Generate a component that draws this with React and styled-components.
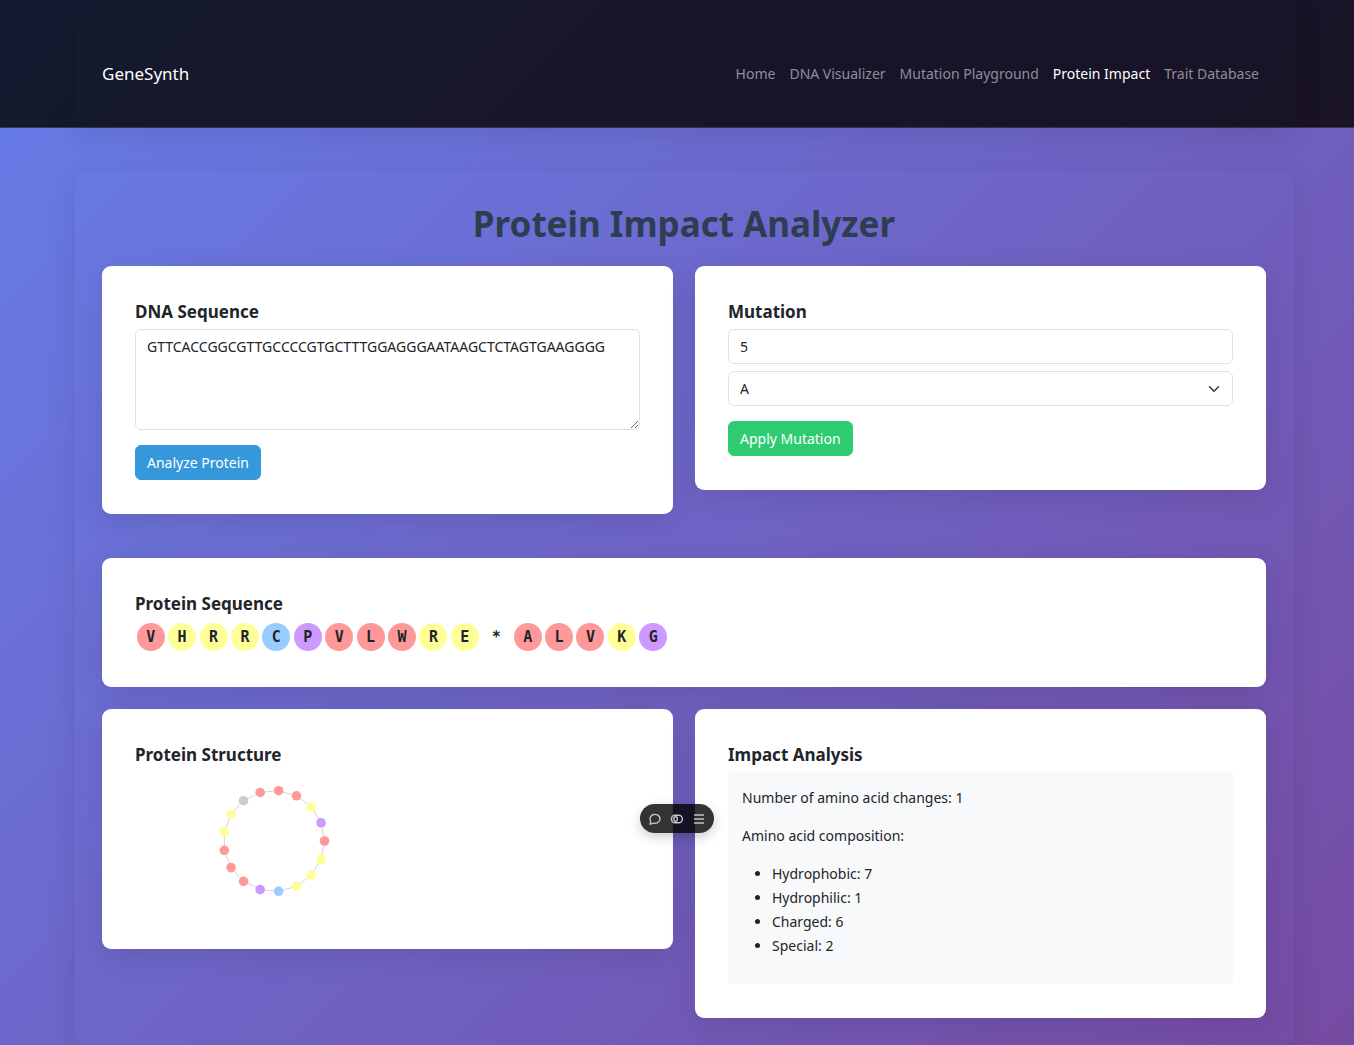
import React, { useState } from "react";
import styled, { createGlobalStyle } from "styled-components";

const FAMILIES = {
  hydrophobic: "#ff9999",
  hydrophilic: "#99ccff",
  charged: "#ffff99",
  special: "#cc99ff",
};

const RESIDUES = {
  V: "hydrophobic", A: "hydrophobic", L: "hydrophobic", W: "hydrophobic",
  C: "hydrophilic",
  H: "charged", R: "charged", E: "charged", K: "charged",
  P: "special", G: "special",
};

const PROTEIN = "VHRRCPVLWRE*ALVKG".split("");

const colorOf = (residue, fallback) => FAMILIES[RESIDUES[residue]] || fallback;

const GlobalStyle = createGlobalStyle`
  *, *::before, *::after { box-sizing: border-box; }
  html { background: #6a62c0; }
  body {
    margin: 0;
    color: #212529;
    font-family: "Segoe UI", "Noto Sans", sans-serif;
    font-size: 14px;
    line-height: 24px;
  }
`;

const Page = styled.div`
  min-height: 100vh;
  background: linear-gradient(135deg, #667eea 0%, #764ba2 100%);
`;

const Navbar = styled.nav`
  height: 128px;
  padding: 0 60px 0 75px;
  background: linear-gradient(135deg, #131a2f 0%, #17172c 30%, #17142a 60%, #191325 100%);
  border-bottom: 1px solid rgba(255, 255, 255, 0.15);
`;

const NavInner = styled.div`
  display: flex;
  align-items: center;
  justify-content: space-between;
  height: 100%;
  padding: 20px 35px 0 27px;
  box-shadow: 0 8px 30px rgba(0, 0, 0, 0.1);
`;

const Brand = styled.a`
  color: #fff;
  font-size: 17px;
  text-decoration: none;
`;

const NavList = styled.ul`
  display: flex;
  gap: 14px;
  margin: 0;
  padding: 0;
  list-style: none;
`;

const NavLink = styled.a`
  color: ${(p) => (p.$active ? "#fff" : "#8f8e97")};
  text-decoration: none;
`;

const Content = styled.div`
  padding: 43px 60px 0 75px;
`;

const Panel = styled.main`
  display: flex;
  flex-direction: column;
  padding: 31px 28px 27px 27px;
  border-radius: 9px;
  box-shadow: 0 8px 30px rgba(0, 0, 0, 0.1);
`;

const Title = styled.h1`
  margin: 0 0 20px;
  color: #2c3e50;
  font-size: 35px;
  line-height: 44px;
  text-align: center;
`;

const Columns = styled.div`
  display: grid;
  grid-template-columns: repeat(2, minmax(0, 1fr));
  align-items: start;
  gap: 22px;
`;

const Card = styled.section`
  padding: 34px 33px;
  background: #fff;
  border-radius: 9px;
  box-shadow: 0 8px 30px rgba(0, 0, 0, 0.1);
`;

const SequenceCard = styled(Card)`
  margin: 44px 0 22px;
`;

const CardTitle = styled.h2`
  margin: 0 0 5px;
  font-size: 17px;
  line-height: 24px;
`;

const TitleLabel = styled.label`
  display: block;
`;

const fieldStyle = `
  display: block;
  width: 100%;
  padding: 5px 11px;
  color: #212529;
  background-color: #fff;
  border: 1px solid #dee2e6;
  border-radius: 6px;
  font: inherit;
`;

const SequenceInput = styled.textarea`
  ${fieldStyle}
  height: 101px;
  margin-bottom: 15px;
  resize: vertical;
`;

const PositionInput = styled.input`
  ${fieldStyle}
  height: 35px;
  margin-bottom: 7px;
`;

const SelectWrap = styled.div`
  display: grid;
  align-items: center;
  margin-bottom: 15px;

  > * { grid-area: 1 / 1; }
  > svg {
    justify-self: end;
    margin-right: 13px;
    pointer-events: none;
  }
`;

const BaseSelect = styled.select`
  ${fieldStyle}
  height: 35px;
  appearance: none;
`;

const Button = styled.button`
  display: block;
  height: 35px;
  padding: 0 11px;
  color: #fff;
  background: ${(p) => p.$color};
  border: 1px solid ${(p) => p.$color};
  border-radius: 6px;
  font: inherit;
  cursor: pointer;
`;

const ResidueStrip = styled.div`
  display: grid;
  grid-template-columns: repeat(${(p) => p.$count}, minmax(0, 1fr));
  justify-items: center;
  max-width: 534px;
  padding: 2px 0;
`;

const Residue = styled.span`
  width: 28px;
  height: 28px;
  border-radius: 50%;
  background: ${(p) => p.$color};
  font: bold 15px/28px Consolas, "DejaVu Sans Mono", monospace;
  text-align: center;
`;

const Structure = styled.svg`
  display: block;
  width: 278px;
  height: 143px;
  max-width: 100%;
`;

const Report = styled.div`
  padding: 14px 14px 12px;
  background: #f8f9fa;
  border-radius: 4px;

  p { margin: 0 0 14px; }
  ul { margin: 0 0 14px; padding-left: 30px; }
`;

const FloatingBar = styled.div`
  position: fixed;
  bottom: 212px;
  left: 50%;
  display: flex;
  align-items: center;
  justify-content: space-between;
  width: 74px;
  height: 29px;
  padding: 0 8px;
  background: rgba(0, 0, 0, 0.8);
  border-radius: 15px;
  box-shadow: 0 4px 12px rgba(0, 0, 0, 0.2);
  transform: translateX(-50%);
`;

const IconButton = styled.button`
  display: flex;
  padding: 0;
  color: #c4c4c4;
  background: none;
  border: 0;
  cursor: pointer;
`;

const LINKS = ["Home", "DNA Visualizer", "Mutation Playground", "Protein Impact", "Trait Database"];

function StructureRing() {
  const nodes = PROTEIN.map((residue, i) => {
    const angle = (i / PROTEIN.length) * Math.PI * 2;
    return {
      x: 139 + 50.5 * Math.cos(angle),
      y: 69 + 50.5 * Math.sin(angle),
      color: colorOf(residue, "#cccccc"),
    };
  });
  return (
    <Structure viewBox="0 0 278 143" role="img" aria-label="Protein structure ring">
      <polygon points={nodes.map((n) => `${n.x},${n.y}`).join(" ")} fill="none" stroke="#d4d4d4" />
      {nodes.map((n, i) => (
        <circle key={i} cx={n.x} cy={n.y} r="4.8" fill={n.color} />
      ))}
    </Structure>
  );
}

export default function App() {
  const [sequence, setSequence] = useState("GTTCACCGGCGTTGCCCCGTGCTTTGGAGGGAATAAGCTCTAGTGAAGGGG");
  const [position, setPosition] = useState("5");
  const [base, setBase] = useState("A");

  return (
    <Page>
      <GlobalStyle />
      <Navbar>
        <NavInner>
          <Brand href="#home">GeneSynth</Brand>
          <NavList>
            {LINKS.map((label) => (
              <li key={label}>
                <NavLink href="#" $active={label === "Protein Impact"}>{label}</NavLink>
              </li>
            ))}
          </NavList>
        </NavInner>
      </Navbar>
      <Content>
        <Panel>
          <Title>Protein Impact Analyzer</Title>
          <Columns>
            <Card>
              <CardTitle><TitleLabel htmlFor="sequence">DNA Sequence</TitleLabel></CardTitle>
              <SequenceInput
                id="sequence"
                spellCheck={false}
                value={sequence}
                onChange={(e) => setSequence(e.target.value)}
              />
              <Button type="button" $color="#3498db">Analyze Protein</Button>
            </Card>
            <Card>
              <CardTitle><TitleLabel htmlFor="position">Mutation</TitleLabel></CardTitle>
              <PositionInput id="position" value={position} onChange={(e) => setPosition(e.target.value)} />
              <SelectWrap>
                <BaseSelect aria-label="New base" value={base} onChange={(e) => setBase(e.target.value)}>
                  <option>A</option>
                  <option>T</option>
                  <option>G</option>
                  <option>C</option>
                </BaseSelect>
                <svg width="12" height="12" viewBox="0 0 16 16" aria-hidden="true">
                  <path d="m2 5 6 6 6-6" fill="none" stroke="#343a40" strokeWidth="2" strokeLinecap="round" strokeLinejoin="round" />
                </svg>
              </SelectWrap>
              <Button type="button" $color="#2ecc71">Apply Mutation</Button>
            </Card>
          </Columns>
          <SequenceCard>
            <CardTitle>Protein Sequence</CardTitle>
            <ResidueStrip $count={PROTEIN.length}>
              {PROTEIN.map((residue, i) => (
                <Residue key={i} $color={colorOf(residue, "transparent")}>{residue}</Residue>
              ))}
            </ResidueStrip>
          </SequenceCard>
          <Columns>
            <Card>
              <CardTitle>Protein Structure</CardTitle>
              <StructureRing />
            </Card>
            <Card>
              <CardTitle>Impact Analysis</CardTitle>
              <Report>
                <p>Number of amino acid changes: 1</p>
                <p>Amino acid composition:</p>
                <ul>
                  <li>Hydrophobic: 7</li>
                  <li>Hydrophilic: 1</li>
                  <li>Charged: 6</li>
                  <li>Special: 2</li>
                </ul>
              </Report>
            </Card>
          </Columns>
        </Panel>
      </Content>
      <FloatingBar role="toolbar" aria-label="Page tools">
        <IconButton type="button" aria-label="Comment">
          <svg width="14" height="14" viewBox="0 0 14 14" fill="none" stroke="currentColor" strokeWidth="1.4" strokeLinejoin="round">
            <path d="M2.2 12.2 2.6 9A5 4.5 0 1 1 5.6 11.2Z" />
          </svg>
        </IconButton>
        <IconButton type="button" aria-label="Toggle view">
          <svg width="14" height="14" viewBox="0 0 14 14" fill="none" stroke="currentColor" strokeWidth="1.4">
            <rect x="1.4" y="3.2" width="11" height="7.6" rx="3.8" />
            <ellipse cx="5.6" cy="7" rx="1.8" ry="2.2" />
          </svg>
        </IconButton>
        <IconButton type="button" aria-label="Menu">
          <svg width="14" height="14" viewBox="0 0 14 14" fill="none" stroke="currentColor" strokeWidth="1.4">
            <path d="M2 3h10M2 7h10M2 11h10" />
          </svg>
        </IconButton>
      </FloatingBar>
    </Page>
  );
}
